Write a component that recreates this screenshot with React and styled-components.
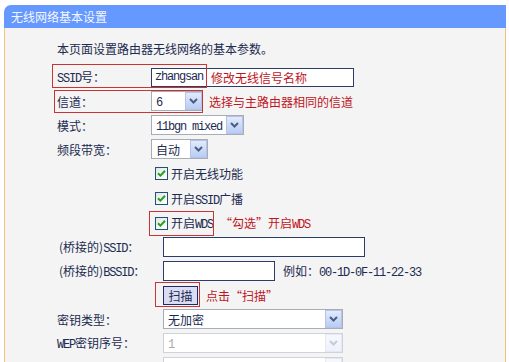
import React from 'react';
import styled, { createGlobalStyle } from 'styled-components';

const GlobalStyle = createGlobalStyle`
  html, body { margin: 0; padding: 0; background: #fff; }
  body {
    font-family: "Noto Sans CJK SC", "Noto Sans", sans-serif;
    font-size: 12px;
    color: #1c2b50;
  }
`;

const Page = styled.div`
  box-sizing: border-box;
  height: 362px;
  overflow: hidden;
  padding: 5px 3px 0 4px;
  display: flex;
  flex-direction: column;
`;

const TitleBar = styled.div`
  flex: none;
  height: 23px;
  line-height: 23px;
  background: #6699ff;
  border-top-left-radius: 7px;
  color: #f4f7ff;
  font-size: 12px;
  padding-left: 7px;
`;

const Panel = styled.div`
  flex: 1;
  background: #f4f4f4;
  border-left: 1px solid #f2c27a;
  border-right: 1px solid #f2c27a;
  padding: 9px 0 0 52px;
  display: flex;
  flex-direction: column;
`;

const Intro = styled.div`
  height: 24px;
  line-height: 24px;
  margin-bottom: 4px;
`;

const Row = styled.div`
  position: relative;
  display: flex;
  align-items: center;
  flex: none;
  height: ${(p) => p.$h || 24}px;
`;

const Label = styled.div`
  flex: none;
  width: ${(p) => p.$w}px;
  white-space: nowrap;
  padding-left: ${(p) => p.$indent || 0}px;
  box-sizing: border-box;
`;

const A = styled.span`
  font-family: "Liberation Mono", "Courier New", monospace;
  font-size: 12px;
  letter-spacing: -1.2px;
`;

const TextBox = styled.div`
  position: relative;
  box-sizing: border-box;
  width: ${(p) => p.$w}px;
  height: ${(p) => p.$h || 20}px;
  border: 1px solid #2b3c68;
  background: #fff;
  padding-left: 3px;
  display: flex;
  align-items: center;
`;

const SelectBox = styled.div`
  box-sizing: border-box;
  width: ${(p) => p.$w}px;
  height: 20px;
  border: 1px solid ${(p) => (p.$disabled ? '#cfd3d8' : '#a7adb4')};
  background: #fff;
  color: ${(p) => (p.$disabled ? '#a9a9a9' : '#1c2b50')};
  display: flex;
  align-items: center;
  padding: 0 0 0 4px;
`;

const ArrowBtn = styled.div`
  margin-left: auto;
  box-sizing: border-box;
  width: 17px;
  height: 18px;
  border: 1px solid ${(p) => (p.$disabled ? '#e3e9f4' : '#b3c4e6')};
  background: ${(p) =>
    p.$disabled
      ? 'linear-gradient(#f6f8fd, #eef2fa)'
      : 'linear-gradient(#e2eafc, #b8ccf5)'};
  display: flex;
  align-items: center;
  justify-content: center;
`;

const Note = styled.span`
  color: #c0141e;
  white-space: nowrap;
  margin-left: ${(p) => p.$ml || 0}px;
`;

const InnerNote = styled.span`
  position: absolute;
  left: 59px;
  top: 50%;
  transform: translateY(-50%);
  color: #c0141e;
  white-space: nowrap;
`;

const Highlight = styled.div`
  position: absolute;
  box-sizing: border-box;
  border: 1px solid #c83434;
  left: ${(p) => p.$x}px;
  top: ${(p) => p.$y}px;
  width: ${(p) => p.$w}px;
  height: ${(p) => p.$h}px;
  pointer-events: none;
`;

const CheckWrap = styled.label`
  display: flex;
  align-items: center;
  gap: 3px;
  white-space: nowrap;
`;

const CheckBox = styled.span`
  box-sizing: border-box;
  width: 13px;
  height: 13px;
  border: 1px solid #1c5180;
  background: linear-gradient(135deg, #e6e6e0, #ffffff);
  display: flex;
  align-items: center;
  justify-content: center;
`;

const ScanButton = styled.button`
  box-sizing: border-box;
  width: 35px;
  height: 19px;
  padding: 0;
  border: 1px solid #1f2b5c;
  background: #dadcf3;
  color: #1c2b50;
  font-family: "Noto Sans CJK SC", sans-serif;
  font-size: 12px;
  line-height: 17px;
`;

const Example = styled.span`
  margin-left: 8px;
  white-space: nowrap;
`;

function Chevron({ disabled }) {
  return (
    <svg width="9" height="6" viewBox="0 0 9 6">
      <path
        d="M1 1 L4.5 4.5 L8 1"
        fill="none"
        stroke={disabled ? '#c3cbdb' : '#4a5d86'}
        strokeWidth="2"
      />
    </svg>
  );
}

function Select({ w, children, disabled }) {
  return (
    <SelectBox $w={w} $disabled={disabled}>
      <span>{children}</span>
      <ArrowBtn $disabled={disabled}>
        <Chevron disabled={disabled} />
      </ArrowBtn>
    </SelectBox>
  );
}

function Check({ children }) {
  return (
    <CheckWrap>
      <CheckBox>
        <svg width="11" height="11" viewBox="0 0 11 11">
          <path d="M2 5.2 L4.4 7.6 L9 2.8" fill="none" stroke="#21a121" strokeWidth="2" />
        </svg>
      </CheckBox>
      <span>{children}</span>
    </CheckWrap>
  );
}

export default function App() {
  return (
    <>
      <GlobalStyle />
      <Page>
        <TitleBar>无线网络基本设置</TitleBar>
        <Panel>
          <Intro>本页面设置路由器无线网络的基本参数。</Intro>

          <Row>
            <Label $w={94}>
              <A>SSID</A>号：
            </Label>
            <TextBox $w={203} $h={19}>
              <A>zhangsan</A>
              <InnerNote>修改无线信号名称</InnerNote>
            </TextBox>
            <Highlight $x={-5} $y={-1} $w={155} $h={24} />
          </Row>

          <Row>
            <Label $w={94}>信道：</Label>
            <Select w={52}>
              <A>6</A>
            </Select>
            <Note $ml={6}>选择与主路由器相同的信道</Note>
            <Highlight $x={-3} $y={1} $w={149} $h={23} />
          </Row>

          <Row>
            <Label $w={94}>模式：</Label>
            <Select w={93}>
              <A>11bgn mixed</A>
            </Select>
          </Row>

          <Row>
            <Label $w={94}>频段带宽：</Label>
            <Select w={57}>自动</Select>
          </Row>

          <Row $h={25}>
            <Label $w={98} />
            <Check>开启无线功能</Check>
          </Row>

          <Row $h={25}>
            <Label $w={98} />
            <Check>
              开启<A>SSID</A>广播
            </Check>
          </Row>

          <Row $h={24}>
            <Label $w={98} />
            <Check>
              开启<A>WDS</A>
            </Check>
            <Note $ml={7}>
              “勾选”开启<A>WDS</A>
            </Note>
            <Highlight $x={92} $y={0} $w={65} $h={25} />
          </Row>

          <Row>
            <Label $w={106} $indent={2}>
              (桥接的)<A>SSID</A>：
            </Label>
            <TextBox $w={202} />
          </Row>

          <Row>
            <Label $w={106} $indent={2}>
              (桥接的)<A>BSSID</A>：
            </Label>
            <TextBox $w={112} />
            <Example>
              例如：<A>00-1D-0F-11-22-33</A>
            </Example>
          </Row>

          <Row>
            <Label $w={106} />
            <ScanButton>扫描</ScanButton>
            <Note $ml={8}>点击“扫描”</Note>
            <Highlight $x={98} $y={-1} $w={45} $h={25} />
          </Row>

          <Row>
            <Label $w={106}>密钥类型：</Label>
            <Select w={180}>无加密</Select>
          </Row>

          <Row>
            <Label $w={106}>
              <A>WEP</A>密钥序号：
            </Label>
            <Select w={180} disabled>
              <A>1</A>
            </Select>
          </Row>

          <Row>
            <Label $w={106}>认证类型：</Label>
            <Select w={180} disabled>
              开放系统
            </Select>
          </Row>
        </Panel>
      </Page>
    </>
  );
}
